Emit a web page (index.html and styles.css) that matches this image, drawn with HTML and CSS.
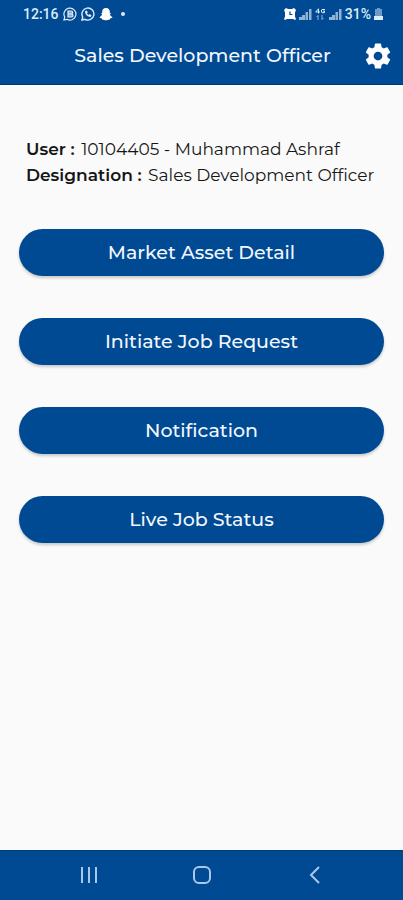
FILE: index.html
```html
<!DOCTYPE html>
<html lang="en">
<head>
<meta charset="utf-8">
<meta name="viewport" content="width=device-width, initial-scale=1">
<title>Sales Development Officer</title>
<link rel="stylesheet" href="styles.css">
</head>
<body>
<div class="status-bar">
  <div class="status-group">
    <time>12:16</time>
    <svg width="14" height="14" viewBox="0 0 14 14" fill="none" stroke="currentColor" stroke-width="1.200"><path d="M1 13l.7-3A6 6 0 1 1 4 12.3z"/><path d="M5 4h3.200a1.400 1.400 0 0 1 0 3H5zm0 3h3.500a1.500 1.500 0 0 1 0 3H5z" fill="currentColor" fill-opacity=".6"/></svg>
    <svg width="14" height="14" viewBox="0 0 14 14" fill="none" stroke="currentColor" stroke-width="1.400"><path d="M1 13l.7-3A6 6 0 1 1 4 12.3z"/><path d="M4 4.200c0 3.300 2.500 5.700 5.600 5.700l.9-1.700-2-1.100-1 .8C6.700 7.600 6.300 7 6 6.300l.8-.9-.9-1.900z" fill="currentColor" stroke="none"/></svg>
    <svg width="14" height="14" viewBox="0 0 14 14" fill="#fff"><path d="M7 1C4.600 1 3.200 2.600 3.200 4.500v1.400L2 6l1 1.300C2.800 8.600 1.800 9.500.5 10.200c.4.700 1.400.9 2.200 1l.4 1.200c1.500-.2 2.300.9 3.900.9s2.400-1.100 3.900-.9l.4-1.200c.8-.1 1.800-.3 2.200-1-1.300-.7-2.300-1.600-2.500-2.900l1-1.300-1.200-.1V4.500C10.800 2.600 9.400 1 7 1z"/></svg>
    <span class="dot"></span>
  </div>
  <div class="status-group status-right">
    <svg width="12" height="12" viewBox="0 0 12 12"><path d="M0 2l2-2 2 1h4l2-1 2 2-1 2.500v4l1 2.500-1 1-2-1H3l-2 1-1-1 1-2.500v-4z" fill="#fff"/><path d="M6 3.500V6.500h2.500" fill="none" stroke="#004a94" stroke-width="1.200"/></svg>
    <svg class="dim" width="13" height="12" viewBox="0 0 13 12" fill="currentColor"><path d="M0 9h3v3H0zM3 7h3v5H3zM6.500 4h2.500v8H6.500zM10 1h2.500v11H10z"/></svg>
    <svg width="11" height="13" viewBox="0 0 11 13" fill="none" stroke="currentColor"><path d="M3.500 5.500V.8L.7 4H5M10 1.500H7L6.500 2v2l.5.700h2.500V3H8"/><path class="dim" d="M3 12V7.500L1.500 9M7 7v4.500L8.500 10"/></svg>
    <svg class="dim" width="13" height="12" viewBox="0 0 13 12" fill="currentColor"><path d="M0 9h3v3H0zM3 7h3v5H3zM6.500 4h2.500v8H6.500zM10 1h2.500v11H10z"/></svg>
    <span>31%</span>
    <svg width="9" height="12" viewBox="0 0 9 12" fill="currentColor"><path opacity=".5" d="M3 0h3v1h2v7H1V1h2z"/><path d="M0 8h9v4H0z"/></svg>
  </div>
</div>
<header class="app-bar">
  <h1>Sales Development Officer</h1>
  <button class="settings" aria-label="Settings">
    <svg width="30" height="30" viewBox="0 0 24 24" fill="currentColor"><path d="M19.430 12.980c.04-.32.070-.64.070-.98s-.03-.66-.070-.98l2.110-1.650c.19-.15.240-.42.120-.64l-2-3.460c-.12-.22-.39-.3-.61-.22l-2.490 1c-.52-.4-1.080-.73-1.690-.98l-.38-2.650C14.460 2.180 14.250 2 14 2h-4c-.25 0-.46.180-.49.420l-.38 2.650c-.61.250-1.170.59-1.690.98l-2.490-1c-.23-.09-.49 0-.61.220l-2 3.460c-.13.220-.07.490.12.640l2.110 1.650c-.04.320-.07.650-.07.980s.03.660.070.980l-2.110 1.650c-.19.150-.24.420-.12.640l2 3.460c.12.220.39.300.61.220l2.490-1c.52.400 1.080.730 1.690.980l.38 2.650c.03.240.24.420.49.420h4c.25 0 .46-.18.490-.42l.38-2.650c.61-.25 1.170-.59 1.690-.98l2.490 1c.23.090.49 0 .61-.22l2-3.460c.12-.22.070-.49-.12-.64zM12 15.500A3.500 3.500 0 1 1 12 8.500a3.500 3.500 0 0 1 0 7z"/></svg>
  </button>
</header>
<main>
  <section class="profile">
    <p><strong>User :</strong> 10104405 - Muhammad Ashraf</p>
    <p><strong>Designation :</strong> Sales Development Officer</p>
  </section>
  <nav class="actions" aria-label="Actions">
    <button>Market Asset Detail</button>
    <button>Initiate Job Request</button>
    <button>Notification</button>
    <button>Live Job Status</button>
  </nav>
</main>
<footer class="nav-bar">
  <button aria-label="Recent apps"><svg width="20" height="20" viewBox="0 0 20 20" fill="none" stroke="currentColor" stroke-width="2"><path d="M3 2v16M10 2v16M17 2v16"/></svg></button>
  <button aria-label="Home"><svg width="20" height="20" viewBox="0 0 20 20" fill="none" stroke="currentColor" stroke-width="2"><rect x="2" y="2" width="16" height="16" rx="5"/></svg></button>
  <button aria-label="Back"><svg width="20" height="20" viewBox="0 0 20 20" fill="none" stroke="currentColor" stroke-width="2"><path d="M14 2l-8 8 8 8"/></svg></button>
</footer>
</body>
</html>
```
FILE: styles.css
```css
* {
  box-sizing: border-box;
}

body {
  margin: 0;
  min-height: 100vh;
  display: flex;
  flex-direction: column;
  background: #fafafa;
  color: #161616;
  font-family: Montserrat, Inter, sans-serif;
}

button {
  border: 0;
  padding: 0;
  background: none;
  color: inherit;
  font: inherit;
  cursor: pointer;
}

svg {
  display: block;
}

.status-bar {
  display: flex;
  justify-content: space-between;
  align-items: center;
  height: 28px;
  padding: 0 20px 0 23px;
  background: #004a94;
  color: #dcecf8;
  font: 500 14px/28px Roboto, sans-serif;
}

.status-group {
  display: flex;
  align-items: center;
  gap: 4px;
}

.status-right {
  gap: 3px;
}

.dim {
  opacity: 0.65;
}

.dot {
  width: 4px;
  height: 4px;
  margin-left: 4px;
  border-radius: 50%;
  background: currentColor;
}

.app-bar {
  display: grid;
  grid-template-columns: 1fr auto 1fr;
  align-items: center;
  height: 57px;
  padding: 0 10px 0 12px;
  background: #004a94;
  border-bottom: 1px solid #003580;
  color: #f2f7fc;
}

h1 {
  grid-column: 2;
  margin: 0;
  font-size: 19px;
  font-weight: 500;
  line-height: 24px;
}

.settings {
  justify-self: end;
  color: #fff;
}

main {
  flex: 1;
  padding: 51px 19px 40px;
}

.profile {
  padding-left: 7px;
  font-size: 17px;
  line-height: 26px;
}

.profile p {
  margin: 0;
}

.profile strong {
  margin-right: 2px;
  font-weight: 600;
}

.actions {
  display: grid;
  gap: 42px;
  margin-top: 41px;
}

.actions button {
  height: 47px;
  border-radius: 24px;
  background: #004a94;
  box-shadow: 0 2px 3px rgba(0, 0, 0, 0.2);
  color: #f2f7fc;
  font-size: 19px;
  font-weight: 500;
}

.nav-bar {
  display: flex;
  justify-content: center;
  align-items: center;
  gap: 93px;
  height: 50px;
  padding-bottom: 2px;
  background: #004a94;
  border-top: 1px solid #003f7d;
  color: #a9c8ec;
}
```
